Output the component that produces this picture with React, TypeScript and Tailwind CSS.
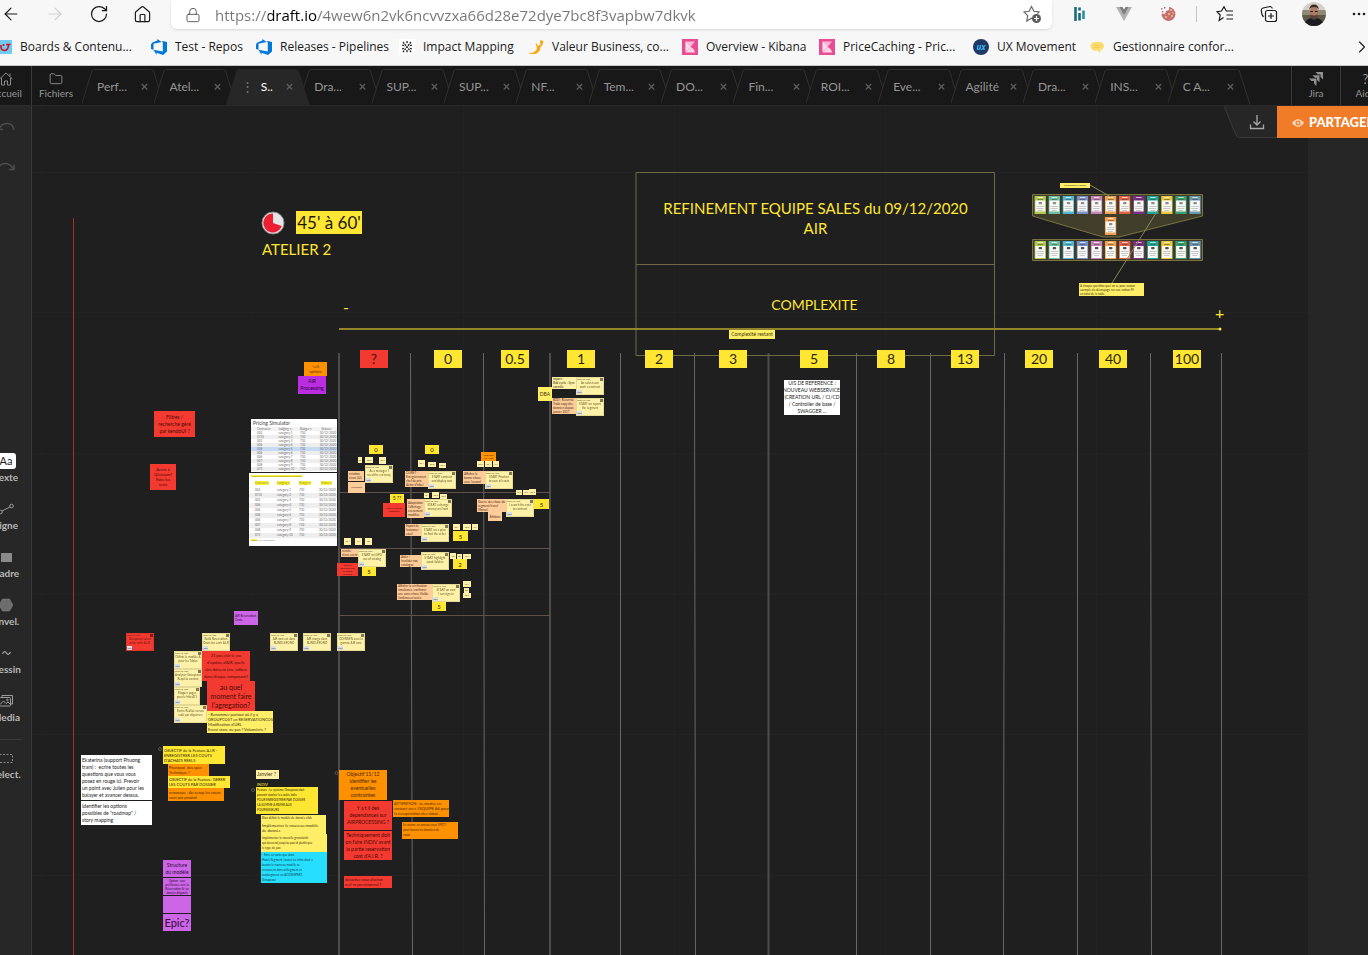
import React from "react";
import { ArrowLeft, ArrowRight, RotateCw, House, Lock, ChevronRight, Folder } from "lucide-react";

/* Offset between page coordinates and the visible part of the board. */
const PAN = { x: 32, y: 106 };

type Tone = "yellow" | "lemon" | "pale" | "peach" | "orange" | "red" | "violet" | "orchid" | "cyan" | "white" | "none";
type Size = "micro" | "xxs" | "xxsLoose" | "xs" | "xsLoose" | "sm" | "md" | "lg" | "xl";

const tones: Record<Tone, string> = {
  yellow: "bg-[#ffe633] text-[#2b2605]",
  lemon: "bg-[#ffee66] text-[#3b360c]",
  pale: "bg-[#fff2a8] text-[#3b360c]",
  peach: "bg-[#ffcc99] text-[#4a2c10]",
  orange: "bg-[#ff9100] text-[#4a2800]",
  red: "bg-[#f33a30] text-[#4d0a06]",
  violet: "bg-[#b82ee0] text-[#2f0040]",
  orchid: "bg-[#cc66e6] text-[#2f0a3a]",
  cyan: "bg-[#26dfff] text-[#06404a]",
  white: "bg-white text-[#222222]",
  none: "text-[#ffe633]",
};

const sizes: Record<Size, string> = {
  micro: "text-[2px] leading-[3px]",
  xxs: "text-[3px] leading-[4px]",
  xxsLoose: "text-[3px] leading-[5px]",
  xs: "text-[4px] leading-[5px]",
  xsLoose: "text-[4px] leading-[7px]",
  sm: "text-[5px] leading-[7px]",
  md: "text-[6px] leading-[7px]",
  lg: "text-[7px] leading-[9px]",
  xl: "text-[11px] leading-[14px]",
};

type NoteData = [x: number, y: number, w: number, h: number, tone: Tone, size: Size, text: string, align?: "left" | "center"];

function place(x: number, y: number, w: number, h: number): React.CSSProperties {
  return { left: x - PAN.x, top: y - PAN.y, width: w, height: h };
}

const headings: [number, string][] = [
  [360, "?"], [434, "0"], [501, "0.5"], [567, "1"], [645, "2"], [719, "3"],
  [800, "5"], [877, "8"], [951, "13"], [1025, "20"], [1099, "40"], [1173, "100"],
];

const notes: NoteData[] = [
  [304, 362, 23, 14, "orange", "xs", "<=5\nsprints", "center"],
  [298, 376, 28, 18, "violet", "sm", "AIR\nProcessing", "center"],
  [154, 411, 41, 26, "red", "sm", "Filtres /\nrecherche géré\npar kendoUI ?", "center"],
  [150, 464, 26, 26, "red", "xs", "Accès à\nQlessium?\nFaire les\ntests", "center"],
  [538, 387, 14, 14, "lemon", "sm", "DBA", "center"],
  [552, 377, 24, 12, "pale", "xxs", "import :\nBdd cyclic : Sync\ncontrôle"],
  [552, 398, 24, 16, "peach", "xxs", "BDD : Récurrité\nTrade copy des\ndonnées depuis\njanvier 2017"],
  [784, 380, 56, 35, "white", "sm", "UIS DE REFERENCE :\nNOUVEAU WEBSERVICE.\n(CREATION URL / CI/CD\n/ Controller de base /\nSWAGGER ...", "center"],
  [729, 330, 46, 9, "lemon", "sm", "Complexité restant", "center"],
  [348, 471, 16, 10, "peach", "xxs", "création\nécran (UI)"],
  [348, 482, 17, 11, "peach", "micro", "Visualisation", "center"],
  [405, 471, 23, 16, "peach", "xxs", "CLIENT :\nEnregistrement\nchef du prix\nAchat d'hôtel"],
  [463, 471, 22, 13, "peach", "xxs", "Afficher la\nbonne chose\navec l'accord"],
  [407, 499, 17, 19, "peach", "xxs", "Adaptation\nl'affichage\névènement\nmodifiée"],
  [477, 499, 29, 13, "peach", "xxs", "Guerre des chose du\nsegment/travel\nManuel"],
  [488, 512, 14, 9, "peach", "xxs", "Éditions", "center"],
  [405, 524, 16, 12, "peach", "xxs", "Export de\nfusionner\nexcel"],
  [341, 549, 17, 8, "peach", "xxs", "récolte\nd'une event"],
  [400, 555, 21, 12, "peach", "xxs", "Aider /\nInvalider nos\ncatalogue"],
  [397, 584, 35, 16, "peach", "xxs", "Afficher la vérification\nsimultanée, confirmer\nune autre chose Visible\nl'ordinateur/accès"],
  [369, 445, 14, 9, "yellow", "md", "0", "center"],
  [425, 445, 14, 9, "yellow", "md", "0", "center"],
  [390, 494, 14, 9, "yellow", "sm", "5 ??", "center"],
  [534, 499, 15, 10, "yellow", "md", "5", "center"],
  [453, 531, 15, 10, "yellow", "md", "5", "center"],
  [362, 567, 14, 9, "yellow", "md", "5", "center"],
  [453, 559, 14, 10, "yellow", "md", "2", "center"],
  [432, 602, 14, 9, "yellow", "md", "5", "center"],
  [481, 452, 15, 9, "orange", "micro", "modif dans\nOCI / Bdd", "center"],
  [383, 503, 22, 14, "red", "micro", "Reste à valider les\ncomposants", "center"],
  [337, 563, 21, 13, "red", "micro", "Vérifier le\ndécoupage avec\nles équipes\ndu pricing", "center"],
  [234, 611, 24, 14, "orchid", "xxs", "AIR Reservation\nCosts"],
  [202, 651, 48, 30, "red", "xsLoose", "21 pas clair le cas\nd'update d'AIR, quelle\nclés doivent être utilisés\ndans chaque composant?", "center"],
  [207, 681, 48, 30, "red", "lg", "au quel\nmoment faire\nl'agregation?", "center"],
  [207, 711, 66, 22, "lemon", "xs", "- Renommer partout où il y a\nGROUPCOST en RESERVATIONCOST\nModification d'URL\nEvent store ou pas ? Volumétrie ?"],
  [81, 755, 71, 45, "white", "sm", "Ekaterina (support Phuong\ntram) :  ecrire toutes les\nquestions que vous vous\nposez en rouge ici. Prevoir\nun point avec Julien pour les\nbalayer et avancer dessus."],
  [81, 801, 71, 24, "white", "sm", "Identifier les options\npossibles de \"roadmap\" /\nstory mapping"],
  [163, 746, 62, 18, "yellow", "xs", "OBJECTIF de la Feature A.I.R -\nENREGISTRER LES COUTS\nD'ACHATS REELS"],
  [168, 764, 41, 12, "orange", "xs", "Pourquoi  des spec\nTechnique ?"],
  [168, 776, 62, 12, "yellow", "xs", "OBJECTIF de la Feature: GERER\nLES COUTS PAR DOSSIER"],
  [168, 788, 56, 13, "orange", "xs", "remarque : Au setup les couts\nsont par produit"],
  [256, 770, 23, 9, "pale", "sm", "Janvier ?"],
  [256, 781, 23, 6, "none", "xs", "INDIV"],
  [256, 787, 62, 27, "yellow", "xxsLoose", "Feature : Le système Groupcost doit\npouvoir stocker les coûts Indiv\nPOUR ENREGISTRER PAR DOSSIER\nLA SOMME A PAYER AUX\nFOURNISSEURS"],
  [261, 815, 65, 7, "lemon", "xxsLoose", "Bien définir le modèle de donnée cible"],
  [261, 822, 65, 12, "lemon", "xs", "Implémenter le nouveau modèle\nde donnée"],
  [261, 834, 66, 18, "lemon", "xxsLoose", "Implémenter la nouvelle granularité\nqui descend jusqu'au pax id plutôt que\nle type de pax"],
  [261, 852, 66, 31, "cyan", "xxsLoose", "- Faire en sorte que dans\nHotel/Segment, toutes les infos dont a\nbesoin le nouveau modèle se\nretrouvent dans airSegment et\nroadsegment ex: ACIDEXPERT,\nGroupcost"],
  [339, 770, 48, 30, "orange", "sm", "Objectif 15/12\nidentifier les\neventuelles\ncontraintes", "center"],
  [344, 801, 48, 29, "red", "sm", "Y a t il des\ndependances sur\nAIRPROCESSING ?", "center"],
  [344, 831, 48, 29, "red", "sm", "Techniquement doit\non faire INDIV avant\nla partie reservation\ncost d'A.I.R. ?", "center"],
  [344, 876, 48, 12, "red", "xs", "détacher cout d'achat\nreel vs previsionnel ?"],
  [393, 800, 56, 17, "orange", "xs", "ATTENTION : se mettre en\ncontact avec L'EQUIPE A6 pour\nla recupération des datas."],
  [402, 822, 56, 17, "orange", "xxsLoose", "Se mettre en contact avec SPICY\npour fournir les données de\ncouts"],
  [163, 860, 28, 17, "orchid", "sm", "Structure\ndu modèle", "center"],
  [163, 878, 28, 17, "orchid", "xxs", "Option : une\npréférence vers la\nRéservation lié au\ndossier dispatch", "center"],
  [163, 896, 28, 17, "orchid", "xs", ""],
  [163, 914, 28, 17, "orchid", "xl", "Epic?", "center"],
  [1060, 183, 30, 5, "lemon", "micro", "Les questions en équipes", "center"],
  [1079, 283, 65, 13, "lemon", "xxs", "A chaque question quel on se pose autour\nexemple du découpage sur une notion M\nun total de la table"],
];

const chips: [number, number, number, number, string][] = [
  [358, 457, 4, 6, "UI"], [365, 457, 8, 6, "US 8"], [379, 457, 7, 7, "US 7"], [418, 460, 7, 7, "US 1"], [428, 462, 8, 5, "US 8"],
  [439, 463, 7, 5, "US 2"], [477, 461, 7, 6, "US 2"], [485, 461, 7, 6, "US 4"], [493, 461, 6, 6, "FIN"], [424, 493, 5, 5, "UI"],
  [432, 492, 7, 6, "US 3"], [440, 494, 7, 5, "US 5"], [516, 490, 6, 5, "UI 2"], [523, 490, 6, 5, "UI 6"], [529, 489, 7, 6, "US 9"],
  [453, 524, 7, 6, "US 1"], [463, 524, 8, 6, "US 5"], [472, 524, 6, 6, "FIN"], [344, 538, 7, 7, "US 1"], [355, 538, 7, 7, "FIN"],
  [365, 538, 7, 7, "US"], [450, 553, 6, 6, "US"], [457, 554, 5, 5, "BE"], [463, 554, 8, 5, "US 2"], [463, 581, 8, 6, "US 1"],
  [464, 588, 5, 5, "BE"], [463, 593, 8, 5, "US 5"],
];

const tickets: [number, number, number, "pale" | "red", string][] = [
  [365, 465, 28, "pale", "As a manager I\nneed the currency"],
  [428, 471, 28, "pale", "START contract\nand display cost"],
  [485, 471, 28, "pale", "START Product\nto save all costs"],
  [424, 499, 28, "pale", "START a change\nmoney on front"],
  [506, 499, 28, "pale", "I search the cost\nto contract"],
  [421, 524, 28, "pale", "START on a price\nto find the seller"],
  [358, 549, 28, "pale", "START on ISPO\nuse of catalog"],
  [421, 552, 28, "pale", "START highlight\nawait folders"],
  [432, 584, 28, "pale", "START on cost\nI can sign in"],
  [576, 377, 28, "pale", "As sales team\nwant a contract"],
  [576, 398, 28, "pale", "START on report\nthe segment"],
  [126, 633, 28, "red", "Groupcost select\norder with A.I.R."],
  [202, 633, 28, "pale", "Build Reservation\nCosts for each A.I.R"],
  [270, 633, 28, "pale", "AIR cost est dans\nBUNDLEFOND"],
  [303, 633, 28, "pale", "AIR marge dans\nBUNDLEFOND"],
  [337, 633, 28, "pale", "COMBIEN avec la\ngamme AIR cost"],
  [174, 651, 28, "pale", "Définir le modèle A\npour les Tables"],
  [174, 669, 28, "pale", "Analyser Groupcost\nRequête contrat"],
  [174, 687, 26, "pale", "Mapper pages\npour le Hot ATL"],
  [174, 705, 33, "pale", "Ecrire Réalisé versus\ncoût par dépenses"],
];

function Note({ data }: { data: NoteData }) {
  const [x, y, w, h, tone, size, text, align = "left"] = data;
  const alignment = align === "center" ? "justify-center text-center" : "justify-start px-px text-left";
  return (
    <div className={`absolute flex items-center whitespace-pre ${alignment} ${tones[tone]} ${sizes[size]}`} style={place(x, y, w, h)}>
      <span>{text}</span>
    </div>
  );
}

function Ticket({ x, y, w, tone, text }: { x: number; y: number; w: number; tone: "pale" | "red"; text: string }) {
  return (
    <article className={`absolute flex flex-col border border-black/10 text-[3px] leading-[4px] ${tones[tone]}`} style={place(x, y, w, 18)}>
      <div className="flex justify-between text-[2px] leading-[3px]">
        <span>PRICING-1297</span>
        <span className="size-[3px] bg-black/50" />
      </div>
      <p className="whitespace-pre text-center opacity-80">{text}</p>
      <span className="mt-auto w-[5px] bg-[#d5dcea] text-center text-[2px] leading-[4px] text-[#3b4a66]">todo</span>
    </article>
  );
}

const simRows = ["002", "0732", "003", "006", "006", "006", "006", "007", "008", "073"];

function SimulatorTable({ second }: { second?: boolean }) {
  return (
    <table className={`w-full table-fixed whitespace-nowrap text-[3px] text-[#6a6a6a] ${second ? "leading-[5px]" : "leading-[4px]"}`}>
      <thead>
        <tr className={second ? "leading-[9px] text-[#a89b00]" : "bg-[#f3f3f3]"}>
          {["Contract", "Lodging", "Budget", "Status"].map((h) => (
            <th key={h} className="pl-[6px] text-left font-normal">
              <span className={second ? "bg-[#f7f244]" : ""}>{h} ▾</span>
            </th>
          ))}
        </tr>
      </thead>
      <tbody>
        {simRows.map((r, i) => (
          <tr key={i} className={!second && i === 4 ? "bg-[#c5dbf5]" : i % 2 ? "bg-[#eeeeee]" : "bg-white"}>
            <td className="pl-[6px]">{r}</td>
            <td className="pl-[6px]">category {i + 1}</td>
            <td className="pl-[6px]">730</td>
            <td className="pl-[4px]">30/12/2020</td>
          </tr>
        ))}
      </tbody>
    </table>
  );
}

const cardColors = ["#b0c850", "#6cc0a0", "#4fb8d0", "#7a90c8", "#c583b8", "#f0a050", "#e06048", "#7a2e88", "#20a898", "#e8c840", "#38a070", "#6898b0"];

function PlanningCard({ x, y, color, filled }: { x: number; y: number; color: string; filled: boolean }) {
  return (
    <g transform={`translate(${x} ${y})`}>
      <rect width="11.3" height="18" fill={color} />
      <rect x="0.8" y={filled ? 5 : 4.5} width="9.7" height={filled ? 12 : 11} fill="#f8f8f6" />
      <rect x="3" y="1" width="5.5" height="1" fill="#ffffff" opacity="0.65" />
      <rect x="3" y="3" width="5.5" height="0.8" fill="#333333" opacity="0.6" />
      <rect x="4" y="6" width="3.5" height="2.2" rx="0.8" fill="#333333" opacity={filled ? 0.85 : 0.55} />
      <path d="M2 10.500h7.500M2 12.500h7M3 14.500h5" stroke="#999999" strokeWidth="0.5" />
    </g>
  );
}

function BoardLines() {
  const thin: [number, number][] = [[410, 412], [483, 484], [620, 620], [694, 695], [856, 856], [930, 930], [1004, 1003], [1077, 1077], [1150, 1151], [1221, 1221]];
  return (
    <svg className="absolute inset-0 size-full" aria-hidden="true">
      <g transform={`translate(${-PAN.x} ${-PAN.y})`} fill="none">
        <path d="M41.5 106V955M252.5 106V955M463.5 106V955M674.5 106V955M885.5 106V955M1096.5 106V955M32 172.500H1308M32 312.500H1308M32 453.500H1308M32 594.500H1308M32 734.500H1308M32 875.500H1308" stroke="#222222" />
        <path d="M73.500 218V1400" stroke="#a8302a" />
        <path d="M339 353V1400M550 353V1400M768.500 353V1400" stroke="#4c4c4c" strokeWidth="2" />
        {thin.map(([a, b]) => (
          <path key={a} d={`M${a + 0.5} 353L${b + 0.5} 955V1400`} stroke="#666666" />
        ))}
        <path d="M339 492.500H550M339 548.500H550M339 615.500H550" stroke="#5f5148" />
        <path d="M636 172.500H994.500V355.500H636ZM636 264.500H994.500" stroke="#6f6945" />
        <path d="M339 329H1220" stroke="#92852b" strokeWidth="2" />
        <circle cx="1220" cy="329" r="1.500" fill="#ffe633" />
        <path d="M1032.500 194.500H1202.500V216L1119 237H1103L1032.500 216Z" fill="#403d2a" stroke="#7a7340" />
        <path d="M1032.500 239.500H1202.500V260.500H1032.500Z" fill="#403d2a" stroke="#7a7340" />
        {cardColors.map((c, i) => (
          <g key={c}>
            <PlanningCard x={1034.6 + i * 14.07} y={196} color={c} filled={false} />
            <PlanningCard x={1034.6 + i * 14.07} y={241} color={c} filled />
          </g>
        ))}
        <PlanningCard x={1104.9} y={217} color="#f0a050" filled={false} />
        <path d="M1090 185L1111 197M1158 210L1112 283" stroke="#8d8650" />
        <circle cx="273" cy="223" r="11" fill="#e6e6e6" stroke="#8a8a8a" />
        <path d="M273 223V213.500A9.500 9.500 0 1 0 281.800 226Z" fill="#ee1f30" />
        <g stroke="#555555">
          <circle cx="160" cy="749" r="1.500" />
          <circle cx="253" cy="790" r="1.500" />
          <circle cx="336.500" cy="773" r="1.500" />
        </g>
      </g>
    </svg>
  );
}

function Board() {
  return (
    <main className="relative min-w-0 flex-1 overflow-hidden bg-[#1f1f1f]">
      <BoardLines />
      <div className="absolute inset-y-0 right-0 w-[60px] bg-[#262626]" />
      <h1 className="absolute text-center text-[15px] leading-[20px] text-[#ffe633]" style={place(636, 198, 359, 40)}>
        REFINEMENT EQUIPE SALES du 09/12/2020
        <br />
        AIR
      </h1>
      <h2 className="absolute text-center text-[14px] leading-[20px] text-[#ffe633]" style={place(636, 295, 357, 20)}>COMPLEXITE</h2>
      <p className="absolute bg-[#ffe633] text-center text-[17px] leading-[23px] text-[#1c1a05]" style={place(296, 211, 66, 23)}>45' à 60'</p>
      <p className="absolute whitespace-nowrap text-[15px] leading-[20px] text-[#ffe633]" style={place(262, 239, 90, 20)}>ATELIER 2</p>
      <span className="absolute text-[16px] leading-[16px] text-[#ffe633]" style={place(343, 299, 10, 16)}>-</span>
      <span className="absolute text-[16px] leading-[16px] text-[#ffe633]" style={place(1215, 305, 12, 16)}>+</span>
      {headings.map(([x, label]) => (
        <div key={label} className={`absolute text-center text-[14px] leading-[18px] ${label === "?" ? tones.red : tones.yellow}`} style={place(x, 350, 28, 18)}>
          {label}
        </div>
      ))}
      <figure className="absolute overflow-hidden bg-white" style={place(251, 419, 86, 53)}>
        <figcaption className="pl-[2px] text-[5px] leading-[8px] text-[#444444]">Pricing Simulator</figcaption>
        <SimulatorTable />
      </figure>
      <figure className="absolute overflow-hidden bg-white" style={place(249, 473, 88, 73)}>
        <figcaption className="pl-[2px] text-[2px] leading-[6px] text-[#8a8000]">
          <span className="bg-[#f7f244]">All contracts with prices and accommodation by departure</span>
        </figcaption>
        <SimulatorTable second />
        <p className="pl-[2px] text-[2px] leading-[5px] text-[#777777]"><span className="bg-[#f7f244]">Export</span> 10 of 73 departures</p>
      </figure>
      {notes.map((n, i) => <Note key={i} data={n} />)}
      {tickets.map(([x, y, w, tone, text], i) => <Ticket key={i} x={x} y={y} w={w} tone={tone} text={text} />)}
      {chips.map(([x, y, w, h, text], i) => (
        <span key={i} className="absolute flex items-center justify-center whitespace-nowrap bg-[#fff2a8] text-[2px] leading-[3px] text-[#3b360c]" style={place(x, y, w, h)}>{text}</span>
      ))}
      <div className="absolute right-0 top-0 flex h-8">
        <button aria-label="Télécharger" className="relative flex w-[53px] items-center justify-center pl-3">
          <svg className="absolute inset-0" width="53" height="33" aria-hidden="true">
            <path d="M0 0L13 31.500H53V0Z" fill="#262626" />
            <path d="M0 0L12 29Q13 31.500 16 31.500H53" fill="none" stroke="#3a3a3a" />
          </svg>
          <svg className="relative" width="16" height="16" viewBox="0 0 16 16" fill="none" stroke="#a8a8a8" strokeWidth="1.300" aria-hidden="true">
            <path d="M8 1v9.500M4.500 7.500L8 11l3.500-3.500M1.500 10.500v4h13v-4" />
          </svg>
        </button>
        <button className="flex w-[91px] items-center gap-[5px] overflow-hidden bg-[#f07c27] pl-[15px] pt-px text-[13px] font-black text-white">
          <svg className="shrink-0" width="12" height="8" viewBox="0 0 12 8" aria-hidden="true">
            <path d="M0 4Q6-3.500 12 4Q6 11.500 0 4Z" fill="#fbd9c0" />
            <circle cx="6" cy="4" r="2.500" fill="#f07c27" />
            <circle cx="6" cy="4" r="1.200" fill="#fbd9c0" />
          </svg>
          PARTAGER
        </button>
      </div>
    </main>
  );
}

const bookmarks: { label: string; width: string; icon: React.ReactNode }[] = [
  { label: "Boards & Contenu...", width: "w-[155px]", icon: <svg width="16" height="16" viewBox="0 0 16 16"><rect y="1" width="16" height="14" fill="#70cbf4" /><path d="M5 6q-.5 5.500 3.500 5.500q4-.5 4-6M10 5.500h4.500" fill="none" stroke="#d40e14" strokeWidth="1.600" /><circle cx="7.500" cy="6" r="1" fill="#d40e14" /></svg> },
  { label: "Test - Repos", width: "w-[105px]", icon: <AzureIcon /> },
  { label: "Releases - Pipelines", width: "w-[143px]", icon: <AzureIcon /> },
  { label: "Impact Mapping", width: "w-[129px]", icon: <svg width="16" height="16" viewBox="0 0 16 16"><rect width="16" height="16" fill="#fff" /><path d="M4 3l8 10M12 3L4 13M8 2v3M8 11v3M3 6l3 1M13 6l-3 1M3 10l3-1M13 10l-3-1" stroke="#222" strokeWidth="1.300" strokeDasharray="2 .8" /></svg> },
  { label: "Valeur Business, co...", width: "w-[154px]", icon: <svg width="16" height="16" viewBox="0 0 16 16"><path d="M7.500 4Q9 4.500 10 7Q11 6 12.500 5.500Q11.500 3 12.500 1Q13.500 .5 14 2Q15 1.500 15.500 2.500Q15 6 12.500 8Q12 14.500 6 15Q1 15.500 .5 13.500Q3 14.500 6 13Q9 11.500 9 9Z" fill="#f7a813" /></svg> },
  { label: "Overview - Kibana", width: "w-[137px]", icon: <KibanaIcon /> },
  { label: "PriceCaching - Pric...", width: "w-[154px]", icon: <KibanaIcon /> },
  { label: "UX Movement", width: "w-[117px]", icon: <span className="flex size-4 items-center justify-center rounded-full bg-[#1f3864] text-[8px] font-bold italic lowercase text-[#35b8f0]">ux</span> },
  { label: "Gestionnaire confor...", width: "w-[160px]", icon: <svg width="15" height="16" viewBox="0 0 15 16"><path d="M2 4Q4 2.500 7 3Q11 2 13 4.500Q15 7 13 9.500Q12 11.500 10 11L10.500 13.500Q8 13 7.500 11.500Q3 12.500 1.500 10Q-.5 6.500 2 4Z" fill="#fbdc6e" /><path d="M4 6.500h7M3.500 8.500h6" stroke="#f3c750" strokeWidth=".8" /></svg> },
];

function AzureIcon() {
  return (
    <svg width="16" height="16" viewBox="0 0 16 16">
      <path d="M0 5.300L1.400 3.500L6.400 1.400V0L10.700 3.100L2.500 4.700V10.800L0 10.100ZM16 3V12.500L12 16L5.500 13.700V16L2.500 10.800L11.800 12.600V3.200L10.700 3.100L11.800 2Z" fill="#0078d7" />
    </svg>
  );
}

function KibanaIcon() {
  return (
    <svg width="16" height="16" viewBox="0 0 16 16">
      <rect width="16" height="16" fill="#ea4c93" />
      <path d="M3.500 2.500H13L8.500 8L3.500 12.500Z" fill="#f9b9d4" />
      <path d="M3.500 13.500L8.500 8Q12.500 9.500 13 13.500Z" fill="#fbd3e4" />
      <path d="M3.500 2.500L8.500 8L3.500 13.500Z" fill="#fff" opacity=".5" />
    </svg>
  );
}

function BrowserChrome() {
  return (
    <header className="border-b border-[#c9c9c9] bg-[#f7f7f7] font-['Open_Sans','Noto_Sans',sans-serif]">
      <div className="flex h-[29px] items-start">
        <div className="flex h-7 w-[171px] shrink-0 items-center gap-6 pl-px text-[#1b1b1b]">
          <button aria-label="Précédent"><ArrowLeft size={20} strokeWidth={1.4} /></button>
          <button aria-label="Suivant" className="text-[#cfcfcf]"><ArrowRight size={20} strokeWidth={1.4} /></button>
          <button aria-label="Actualiser"><RotateCw size={20} strokeWidth={1.5} /></button>
          <button aria-label="Accueil du navigateur"><House size={19} strokeWidth={1.5} /></button>
        </div>
        <div className="flex h-[29px] min-w-0 flex-1 items-center rounded-b-md bg-white pl-[14px] pr-[10px] shadow-sm">
          <label htmlFor="url" aria-label="Adresse" className="shrink-0">
            <Lock size={16} strokeWidth={1.4} className="text-[#555555]" />
          </label>
          <input
            id="url"
            defaultValue="https://draft.io/4wew6n2vk6ncvvzxa66d28e72dye7bc8f3vapbw7dkvk"
            className="ml-[14px] min-w-0 flex-1 bg-[linear-gradient(90deg,#767676_53px,#000000_53px,#000000_102px,#767676_102px)] bg-clip-text text-[15px] leading-[22px] text-transparent outline-none"
          />
          <button aria-label="Ajouter aux favoris">
            <svg width="19" height="19" viewBox="0 0 19 19" fill="none" stroke="#666666" strokeWidth="1.200">
              <path d="M10 14L8.500 13.200L3.800 16L4.700 10.700L1 7L6.100 6.300L8.500 1.500L10.900 6.300L16 7L14.500 8.500" />
              <circle cx="13.500" cy="13.500" r="4.500" fill="#5c5c5c" stroke="none" />
              <path d="M13.500 11v5M11 13.500h5" stroke="#fff" />
            </svg>
          </button>
        </div>
        <div className="flex h-7 w-[316px] shrink-0 items-center overflow-hidden pl-[20px] [&>*]:shrink-0">
          <button aria-label="Extension H" className="w-[44px]">
            <svg width="16" height="16" viewBox="0 0 16 16" strokeWidth="2.600" fill="none">
              <path d="M3.500 1v14M7.500 1.500v3M7.500 7v7.500" stroke="#1a6a80" />
              <path d="M11.500 4.500v8.500" stroke="#2a8fa3" />
            </svg>
          </button>
          <button aria-label="Extension Vue" className="w-[44px]">
            <svg width="16" height="14" viewBox="0 0 16 14"><path d="M0 0h4l4 7l4-7h4L8 14Z" fill="#b3b3b3" /><path d="M3.500 0H6.500L8 2.700L9.500 0h3L8 8Z" fill="#7b7b7b" /></svg>
          </button>
          <button aria-label="Extension cookies" className="w-[36px]">
            <svg width="16" height="16" viewBox="0 0 16 16"><path d="M9 1a7 7 0 1 1-7.500 6.500L5 8l1-3l3-1Z" fill="#c77272" /><g fill="#f0c477"><circle cx="11" cy="4" r="1" /><circle cx="9" cy="8" r="1" /><circle cx="6" cy="11" r="1" /><circle cx="12" cy="10" r="1" /><circle cx="13" cy="7" r=".8" /></g><path d="M1 2h1.500v1.500H1ZM4 1h1.500v1.500H4ZM2 5h1.500v1.500H2Z" fill="#c77272" /></svg>
          </button>
          <div className="mr-[19px] h-[16px] w-px bg-[#c4c4c4]" />
          <button aria-label="Favoris" className="w-[44px]">
            <svg width="18" height="18" viewBox="0 0 18 18" fill="none" stroke="#1b1b1b" strokeWidth="1.200"><path d="M7.500 12.500L3.200 15.500L4.200 10L1 6.700L5.500 6L8 1.700L10.300 6H17M10.500 10H17M10.500 14H17" /></svg>
          </button>
          <button aria-label="Collections" className="w-[42px]">
            <svg width="18" height="18" viewBox="0 0 18 18" fill="none" stroke="#1b1b1b" strokeWidth="1.200"><path d="M3.500 12Q1.500 10 1.300 5.500Q1.200 3.500 3 3L10 1.500Q12 1.500 12.300 3.500" /><rect x="5.500" y="5.500" width="11" height="11" rx="2" /><path d="M11 8v6M8 11h6" /></svg>
          </button>
          <button aria-label="Profil" className="mr-[26px]">
            <svg width="24" height="24" viewBox="0 0 24 24">
              <defs><clipPath id="avatar"><circle cx="12" cy="12" r="12" /></clipPath></defs>
              <g clipPath="url(#avatar)">
                <rect width="24" height="24" fill="#d3d0c8" />
                <path d="M0 8h24v5H0Z" fill="#8f8a78" />
                <path d="M0 13h24v11H0Z" fill="#5f5a48" />
                <path d="M2 24q1-7 7-8h6q6 1 7 8Z" fill="#1c1d22" />
                <ellipse cx="12" cy="10.500" rx="4.300" ry="6.500" fill="#ad7b62" />
                <path d="M7.300 8q0-5.500 4.700-5.500t4.700 5.500q-1-3-4.700-3t-4.700 3Z" fill="#3a2a22" />
                <path d="M8 12.500q4 2 8 0q0 5-4 5.200q-4-.2-4-5.200Z" fill="#5b4136" />
                <path d="M8.500 9.500h2.500M13 9.500h2.500" stroke="#221a18" />
              </g>
            </svg>
          </button>
          <button aria-label="Menu du navigateur">
            <svg width="16" height="4" viewBox="0 0 16 4" fill="#1b1b1b"><circle cx="2" cy="2" r="1.300" /><circle cx="7" cy="2" r="1.300" /><circle cx="12" cy="2" r="1.300" /></svg>
          </button>
        </div>
      </div>
      <nav aria-label="Favoris" className="flex h-9 items-center overflow-hidden text-[12px] leading-4 text-[#1b1b1b]">
        <div className="-ml-[4px] flex min-w-0 flex-1">
          {bookmarks.map((b) => (
            <a key={b.label} href="#" className={`flex shrink-0 items-center gap-2 whitespace-nowrap ${b.width}`}>
              <span className="shrink-0">{b.icon}</span>
              {b.label}
            </a>
          ))}
        </div>
        <button aria-label="Plus de favoris" className="-mr-[4px]"><ChevronRight size={20} strokeWidth={1.3} /></button>
      </nav>
    </header>
  );
}

const tabs = ["Perf...", "Atel...", "S..", "Dra...", "SUP...", "SUP...", "NF...", "Tem...", "DO...", "Fin...", "ROI...", "Eve...", "Agilité", "Dra...", "INS...", "C A..."];

function TabBar() {
  return (
    <div className="flex h-10 overflow-hidden border-b border-[#2a2a2a] bg-[#181818] text-[#959595]">
      <div className="flex w-8 shrink-0 justify-end overflow-hidden border-r border-[#3a3a3a]">
        <a href="#" className="flex w-[50px] shrink-0 flex-col items-center pt-[6px] text-[10px] leading-[14px]">
          <svg width="14" height="14" viewBox="0 0 14 14" fill="none" stroke="#8a8a8a" aria-hidden="true"><path d="M.5 7L7 1L13.500 7M2.500 6V13H5.500V9H8.500V13H11.500V6M11 4V1.500" /></svg>
          Accueil
        </a>
      </div>
      <a href="#" className="flex w-12 shrink-0 flex-col items-center pt-[6px] text-[10px] leading-[14px]">
        <Folder size={14} strokeWidth={1.5} aria-hidden="true" />
        Fichiers
      </a>
      <nav aria-label="Tableaux ouverts" className="ml-[2px] flex max-w-[1158px] min-w-0 flex-1">
        {tabs.map((t, i) => {
          const active = i === 2;
          return (
            <div key={i} className={`relative flex min-w-0 flex-1 items-center pt-[2px] text-[12px] ${active ? "z-10 text-white" : ""}`}>
              <svg className="absolute -right-[10px] left-0 top-[3px] h-[37px] w-[calc(100%+10px)]" viewBox="0 0 83 37" preserveAspectRatio="none" aria-hidden="true">
                <path d="M-1 37L10 2Q10.500 .5 12 .5H70Q71.500 .5 72 2L83 37" fill={active ? "#272727" : "#181818"} stroke={active ? "#272727" : "#303030"} />
              </svg>
              {active && <span className="absolute left-[14px] text-[13px] text-[#777777]">⋮</span>}
              <a href="#" className={`relative min-w-0 flex-1 whitespace-nowrap ${active ? "pl-[34px]" : "pl-[15px]"}`}>{t}</a>
              <button aria-label={`Fermer ${t}`} className="relative mr-[6px] shrink-0">
                <svg width="7" height="7" viewBox="0 0 7 7" stroke="#5e5e5e" strokeWidth="1.200"><path d="M.8 1L6.200 6.500M6.200 1L.8 6.500" /></svg>
              </button>
            </div>
          );
        })}
      </nav>
      <div className="ml-auto flex w-[77px] shrink-0 overflow-hidden text-[10px] leading-[14px]">
        <a href="#" className="flex w-[49px] shrink-0 flex-col items-center border-l border-[#3a3a3a] pt-[6px]">
          <svg width="14" height="14" viewBox="0 0 14 14" fill="#8f8f8f" aria-hidden="true">
            <path d="M6.500 0H14V7.500L11.500 5V2.500H9Z" /><path d="M3.500 3.300H10.500V10.300L8 8V5.800H5.800Z" /><path d="M0 6.500H7.500V14L5 11.500V9H2.500Z" />
          </svg>
          Jira
        </a>
        <a href="#" className="flex w-[50px] shrink-0 flex-col items-center border-l border-[#3a3a3a] pt-[6px]">
          <span className="text-[13px] leading-[14px]">?</span>
          Aide
        </a>
      </div>
    </div>
  );
}

function Tool({ label, children }: { label: string; children: React.ReactNode }) {
  return (
    <button className="flex h-12 w-full flex-col items-center">
      <span className="flex h-5 items-center justify-center" aria-hidden="true">{children}</span>
      <span className="text-[10px] font-bold leading-[12px] text-[#b8b8b8]">{label}</span>
    </button>
  );
}

function Sidebar() {
  return (
    <aside className="flex w-8 shrink-0 justify-end overflow-hidden border-r border-[#3a3a3a] bg-[#272727]">
      <div className="flex w-[50px] shrink-0 flex-col items-center pt-[14px]">
        <button aria-label="Annuler" className="flex h-10 items-start">
          <svg width="18" height="14" viewBox="0 0 18 14" fill="none" stroke="#4c4c4c" strokeWidth="1.500"><path d="M17 10Q16 3.500 10 3.500Q4.500 3.500 2 9M1 4.500V9.500H6" /></svg>
        </button>
        <button aria-label="Rétablir" className="flex h-10 items-start">
          <svg width="18" height="14" viewBox="0 0 18 14" fill="none" stroke="#4c4c4c" strokeWidth="1.500"><path d="M1 10Q2 3.500 8 3.500Q13.500 3.500 16 9M17 4.500V9.500H12" /></svg>
        </button>
        <div className="mt-[251px] flex w-full flex-col">
          <Tool label="Texte"><span className="rounded-[3px] bg-white px-1 text-[11px] leading-[16px] text-[#222222]">Aa</span></Tool>
          <Tool label="Ligne"><svg width="16" height="12" viewBox="0 0 16 12" fill="none" stroke="#9b9b9b"><circle cx="2.500" cy="9" r="1.800" /><circle cx="13.500" cy="3" r="1.800" /><path d="M4 8L12 4" /></svg></Tool>
          <Tool label="Cadre"><span className="h-[9px] w-[11px] bg-[#8a8a8a]" /></Tool>
          <Tool label="Envel."><svg width="14" height="14" viewBox="0 0 14 14"><path d="M3.500 1H10.500L14 7L10.500 13H3.500L0 7Z" fill="#6d6d6d" stroke="#8a8a8a" strokeWidth=".5" /></svg></Tool>
          <Tool label="Dessin"><svg width="9" height="6" viewBox="0 0 9 6" fill="none" stroke="#a8a8a8" strokeWidth="1.200"><path d="M.5 4Q2.500 0 4.500 3T8.500 2" /></svg></Tool>
          <Tool label="Media"><svg width="14" height="12" viewBox="0 0 14 12" fill="none" stroke="#9b9b9b"><rect x=".5" y="2.500" width="11" height="8.500" rx="1" /><path d="M3 2.500V.5H13.500V9H11.500M1 9.500L4.500 6L7 8.500L9 7L11 9" /><circle cx="8.500" cy="5" r=".8" /></svg></Tool>
          <div className="mb-2 h-px w-[41px] bg-[#3a3a3a]" />
          <Tool label="Select."><svg width="14" height="9" viewBox="0 0 14 9" fill="none" stroke="#8a8a8a" strokeDasharray="2 1.500"><rect x=".5" y=".5" width="13" height="8" /></svg></Tool>
        </div>
      </div>
    </aside>
  );
}

export default function App() {
  return (
    <div className="flex min-h-screen flex-col overflow-hidden bg-[#1f1f1f] font-['Lato','Open_Sans',sans-serif]">
      <BrowserChrome />
      <TabBar />
      <div className="flex min-h-[849px] flex-1">
        <Sidebar />
        <Board />
      </div>
    </div>
  );
}
